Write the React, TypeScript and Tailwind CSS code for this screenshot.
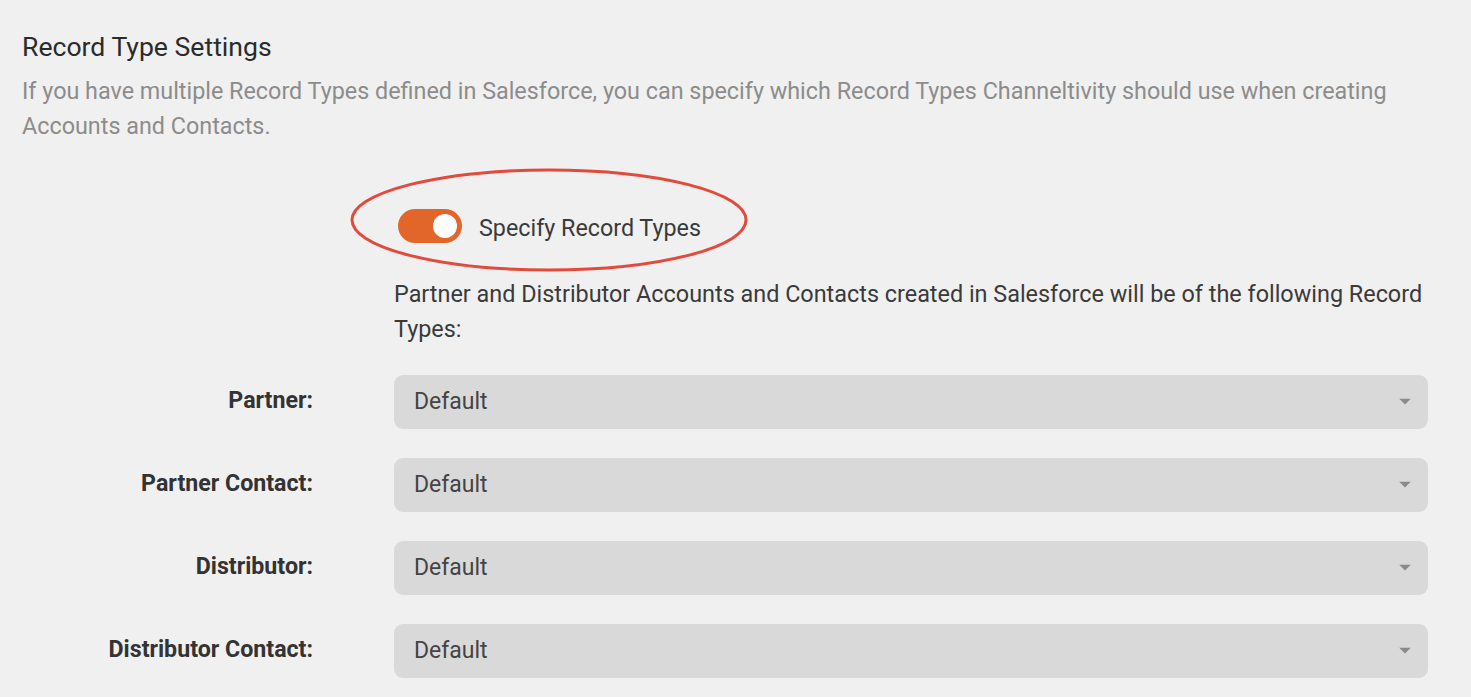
import React, { useState } from 'react';

const rows = ['Partner:', 'Partner Contact:', 'Distributor:', 'Distributor Contact:'];

function SelectBox() {
  return (
    <div className="relative h-[54px] w-full rounded-[9px] bg-[#d9d9d9] flex items-center pl-[20px]">
      <span className="text-[23px] text-[#444]">Default</span>
      <svg className="absolute right-[17px] top-1/2 -translate-y-1/2" width="12" height="7" viewBox="0 0 12 7">
        <path d="M0 0 L12 0 L6 6 Z" fill="#8a8a8a" />
      </svg>
    </div>
  );
}

export default function App() {
  const [on, setOn] = useState(true);

  return (
    <div className="min-h-screen bg-[#f0f0f0] pl-[22px] pr-[43px] pt-[31px] font-['Roboto',sans-serif]">
      <h2 className="text-[26.6px] leading-[32px] text-[#2b2b2b]">Record Type Settings</h2>
      <p className="mt-[11px] text-[23.35px] leading-[35px] text-[#8c8c8c] pr-[20px]">
        If you have multiple Record Types defined in Salesforce, you can specify which Record Types Channeltivity should use when creating Accounts and Contacts.
      </p>

      <div className="grid grid-cols-[291px_1fr] gap-x-[81px]">
        <div />
        <div>
          {/* toggle row */}
          <div className="relative mt-[65px] ml-[4px] flex h-[34px] items-center gap-[17px]">
            <svg className="pointer-events-none absolute left-[-48px] top-[-41px]" width="400" height="105" viewBox="0 0 400 105">
              <ellipse cx="199" cy="52" rx="197" ry="50" fill="none" stroke="#e24b3b" strokeWidth="3" />
            </svg>
            <button
              onClick={() => setOn(!on)}
              className={`relative h-[34px] w-[64px] rounded-full ${on ? 'bg-[#e2652a]' : 'bg-[#bdbdbd]'}`}
            >
              <span className={`absolute top-[5px] h-[24px] w-[24px] rounded-full bg-white ${on ? 'left-[35px]' : 'left-[5px]'}`} />
            </button>
            <span className="pt-[4px] text-[23.3px] text-[#3a3a3a]">Specify Record Types</span>
          </div>

          <p className="mt-[34px] text-[23.4px] leading-[35px] text-[#3a3a3a]">
            Partner and Distributor Accounts and Contacts created in Salesforce will be of the following Record Types:
          </p>
        </div>
      </div>

      <div className="mt-[28px] grid grid-cols-[291px_1fr] gap-x-[81px] gap-y-[29px]">
        {rows.map((label) => (
          <React.Fragment key={label}>
            <div className="flex items-center justify-end pb-[4px] text-[23.2px] font-bold text-[#333]">{label}</div>
            <SelectBox />
          </React.Fragment>
        ))}
      </div>
    </div>
  );
}
